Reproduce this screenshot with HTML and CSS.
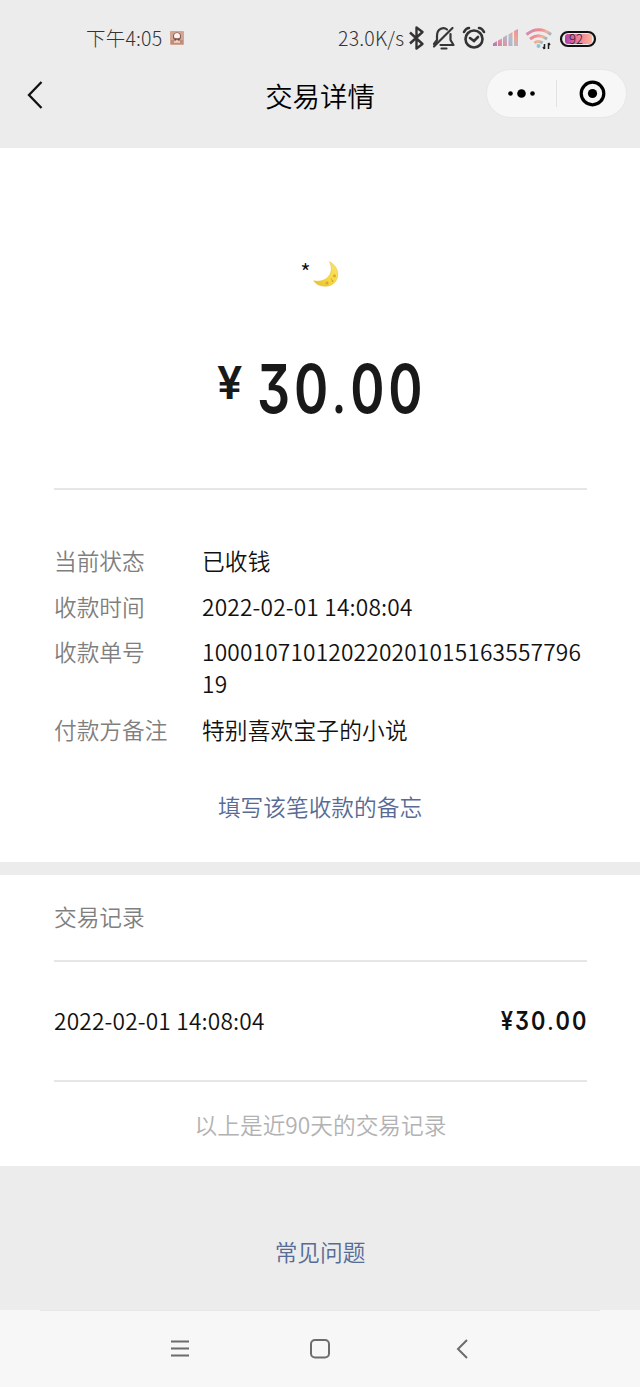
FILE: index.html
```html
<!DOCTYPE html>
<html lang="zh-CN">
<head>
<meta charset="utf-8">
<title>交易详情</title>
<link rel="stylesheet" href="styles.css">
</head>
<body>
<header class="top">
  <div class="status">
    <span class="clock">下午4:05</span>
    <svg class="app-note" width="14" height="14" viewBox="0 0 14 14"><rect width="14" height="14" rx="1" fill="#d3a593"/><rect x="1" y="9" width="12" height="4" fill="#c08c7c"/><circle cx="7" cy="5.500" r="4" fill="#7d5853"/><circle cx="7" cy="5" r="3" fill="#fff2e9"/><path d="M4 11h6M7 8v3" stroke="#f4d9cc" stroke-width="1.500"/><path d="M5 8h4" stroke="#5f403e" stroke-width="1.300"/></svg>
    <span class="speed">23.0K/s</span>
    <svg class="status-icons" width="194" height="30" viewBox="406 23 194 30" fill="none">
      <defs>
        <linearGradient id="sig" x1="493" y1="46" x2="518" y2="30" gradientUnits="userSpaceOnUse"><stop stop-color="#a779ba"/><stop offset=".3" stop-color="#e78f9d"/><stop offset=".6" stop-color="#a9bfd5"/><stop offset=".8" stop-color="#f0a58f"/><stop offset="1" stop-color="#d890b5"/></linearGradient>
        <linearGradient id="wifi" x1="526" y1="28" x2="548" y2="48" gradientUnits="userSpaceOnUse"><stop stop-color="#c78bc0"/><stop offset=".4" stop-color="#f18a8f"/><stop offset=".6" stop-color="#f5b298"/><stop offset=".8" stop-color="#79b7d2"/></linearGradient>
        <linearGradient id="bat"><stop stop-color="#ae3daa"/><stop offset=".4" stop-color="#e5759b"/><stop offset="1" stop-color="#ffb39a"/></linearGradient>
      </defs>
      <path d="M410 32.500 422.500 44 416.500 48.500V27.500L422.500 32 410 43.500" stroke="#333" stroke-width="2.400" stroke-linejoin="round"/>
      <g stroke="#363636" stroke-width="2.200" stroke-linecap="round" stroke-linejoin="round"><path d="M434 46.500 452.500 28M437 40V36c0-8 7-9 10-6.500M450.500 34v6l3 5h-13M437 40l-3 4M441.500 48.500h5"/></g>
      <g stroke="#333" stroke-width="2.600" stroke-linecap="round"><circle cx="474" cy="39" r="8.500"/><path d="m470 38 4 3 4-4M464 32q2-4 5-4M484 32q-2-4-5-4"/></g>
      <g fill="url(#sig)"><path d="M493 43.500 497 41v5h-4zM498 40.500l4-2V46h-4zM503 37.500l4-2.500V46h-4zM508.500 34.500l4-2.500V46h-4zM514 31l4-2V46h-4z"/></g>
      <g stroke="url(#wifi)" stroke-width="3"><path d="M526.500 34.500q12-9.500 24.500 0M530 39q8.500-6.500 17 0M534.500 43q4-3 8 0"/></g><circle cx="538.500" cy="46" r="2" fill="#8cc4d7"/>
      <path d="M544.500 44v5m-1.500-2 1.500 2M548.500 49v-6m0 0 1.500 2" stroke="#222" stroke-width="1.500"/>
      <rect x="561" y="32" width="34" height="14" rx="7" stroke="#111" stroke-width="2.200"/><rect x="565" y="34" width="27" height="10" rx="3" fill="url(#bat)"/>
      <text class="battery-text" x="569" y="43.500">92</text>
    </svg>
  </div>
  <div class="nav">
    <svg class="back" width="20" height="32" viewBox="0 0 20 32"><path d="M15.500 3 3 16l12.500 13" fill="none" stroke="#111" stroke-width="2.300"/></svg>
    <h1 class="title">交易详情</h1>
    <div class="capsule">
      <svg width="139" height="47" viewBox="0 0 139 47"><circle cx="23.500" cy="23.500" r="2.300"/><circle cx="34.500" cy="23.500" r="4.300"/><circle cx="45.500" cy="23.500" r="2.300"/><path d="M69.500 10v27" stroke="#e1e1e1"/><circle cx="105.500" cy="23.500" r="11.300" fill="none" stroke="#000" stroke-width="3.200"/><circle cx="105.500" cy="23.500" r="4.600"/></svg>
    </div>
  </div>
</header>
<main>
  <section class="detail">
    <div class="payer"><span class="star">*</span>
      <svg width="26" height="26" viewBox="0 0 26 26"><defs><linearGradient id="moon" x1="0" y1="1" x2="1" y2="0"><stop stop-color="#eab82e"/><stop offset=".45" stop-color="#f5d941"/><stop offset="1" stop-color="#f8e66d"/></linearGradient></defs><path d="M16.500.8C29 7 27 25 12.500 25.200 7 25.300 3 23.500.7 19.800 13 22.500 22.500 12 16.500.8Z" fill="url(#moon)" stroke="#e6c144" stroke-width=".6"/><g fill="#d9a52c"><circle cx="21.500" cy="15" r="1.400"/><circle cx="14" cy="22" r="1.500"/><circle cx="19.500" cy="20" r="1"/><circle cx="18.500" cy="18" r=".7"/></g></svg>
    </div>
    <div class="amount"><span class="yen">¥</span><span class="sum">30<span class="point">.</span>00</span></div>
    <dl class="facts">
      <dt>当前状态</dt><dd>已收钱</dd>
      <dt>收款时间</dt><dd>2022-02-01 14:08:04</dd>
      <dt>收款单号</dt><dd>10001071012022020101516355779619</dd>
      <dt>付款方备注</dt><dd>特别喜欢宝子的小说</dd>
    </dl>
    <a class="memo">填写该笔收款的备忘</a>
  </section>
  <section class="records">
    <h2 class="records-title">交易记录</h2>
    <div class="record"><span>2022-02-01 14:08:04</span><span class="record-sum">¥30<span class="point">.</span>00</span></div>
    <p class="hint">以上是近90天的交易记录</p>
  </section>
</main>
<footer class="help"><a>常见问题</a></footer>
<div class="system-nav">
  <svg width="640" height="77" viewBox="0 0 640 77" fill="none" stroke="#6c6c6c" stroke-width="2"><path d="M40 .5h560" stroke="#e7e7e7" stroke-width="1"/><path d="M171 31.500h18M171 38.500h18M171 45.500h18"/><rect x="311" y="30" width="18" height="17.500" rx="4"/><path d="M467 30l-9 9 9 9"/></svg>
</div>
</body>
</html>
```
FILE: styles.css
```css
* { box-sizing: border-box; }
body {
  margin: 0;
  width: 640px;
  height: 1387px;
  overflow: hidden;
  background: #ececec;
  color: #111;
  font: 350 22.7px/32px "Noto Sans CJK SC", sans-serif;
}
svg { display: block; flex: none; }
h1, h2, p, dl, dd { margin: 0; font-weight: inherit; }
.top { height: 148px; }
.status {
  display: flex;
  align-items: center;
  height: 60px;
  padding: 16px 0 0 86px;
  font-weight: 300;
  font-size: 19.5px;
  line-height: 30px;
  color: #333;
}
.clock { width: 84px; letter-spacing: .2px; white-space: nowrap; }
.speed { width: 68px; margin-left: 154px; white-space: nowrap; letter-spacing: .2px; }
.battery-text { font-size: 13px; font-weight: 300; fill: #222; }
.nav {
  display: grid;
  grid-template-columns: 153px 1fr 153px;
  align-items: center;
  height: 70px;
}
.back { margin-left: 26px; }
.title { font-size: 27.4px; line-height: 40px; text-align: center; color: #000; }
.capsule {
  width: 139px;
  height: 47px;
  margin-top: -3px;
  border-radius: 24px;
  background: #f7f7f7;
  box-shadow: 0 0 0 1px #e7e7e7;
}
.detail {
  height: 714px;
  padding: 112px 53px 0 54px;
  background: #fff;
}
.payer { display: flex; justify-content: center; gap: 2px; height: 32px; padding-right: 2px; }
.star { margin-top: -4px; }
.payer svg { margin-top: 1px; }
.amount {
  display: flex;
  height: 198px;
  padding: 60px 0 0 163px;
  border-bottom: 2px solid #e6e6e6;
  color: #191919;
  font-family: Inter, Roboto, sans-serif;
  font-weight: 600;
  font-feature-settings: "cv09";
}
.yen { width: 40px; font-size: 45px; line-height: 61px; }
.sum {
  font-size: 67px;
  line-height: 74px;
  letter-spacing: 4.9px;
  transform: scaleX(.775);
  transform-origin: left;
}
.point { font-family: Roboto, sans-serif; font-weight: 500; }
.facts {
  display: grid;
  grid-template-columns: 148px 381px;
  row-gap: 13.5px;
  padding-top: 55px;
}
.facts dt, .records-title { color: #7f7f7f; }
.facts dd { overflow-wrap: anywhere; letter-spacing: .18px; }
.memo { display: block; margin-top: 45px; padding-right: 1px; text-align: center; color: #576b95; }
.records {
  height: 291px;
  margin-top: 13px;
  padding: 0 53px 0 54px;
  background: #fff;
}
.records-title { height: 85px; padding-top: 26px; font-size: inherit; }
.record {
  display: flex;
  justify-content: space-between;
  align-items: center;
  height: 122px;
  border: solid #e6e6e6;
  border-width: 2px 0;
  letter-spacing: .18px;
}
.record-sum {
  margin-right: -1px;
  font: 600 26px/32px Inter, Roboto, sans-serif;
  font-feature-settings: "cv09";
  letter-spacing: 2.4px;
  transform: scaleX(.84);
  transform-origin: right;
}
.hint { padding-top: 27px; text-align: center; color: #b2b2b2; }
.help { height: 144px; padding-top: 70px; text-align: center; color: #576b95; }
.system-nav { height: 77px; background: #f7f7f7; }
```
